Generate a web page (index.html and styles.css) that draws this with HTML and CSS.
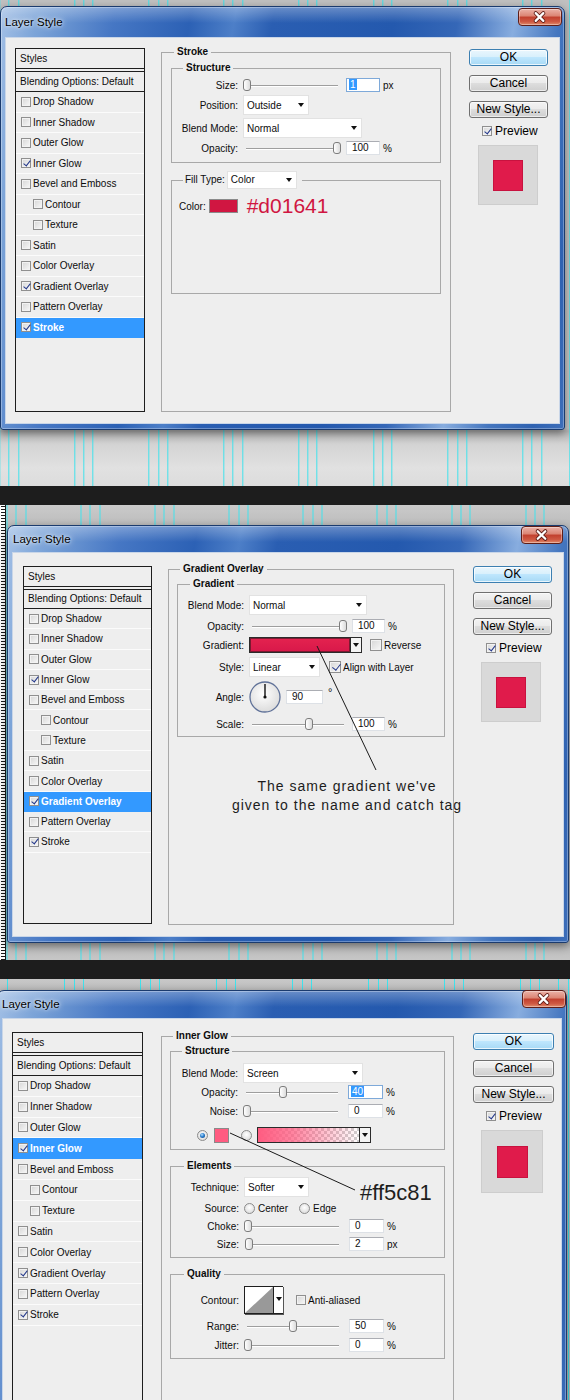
FILE: index.html
```html
<!DOCTYPE html>
<html lang="en">
<head>
<meta charset="utf-8">
<title>Layer Style</title>
<link rel="stylesheet" href="styles.css">
</head>
<body>
<main class="page">

<section class="band band1">
 <div class="dialog d1">
  <div class="titlebar"><span class="title">Layer Style</span><span class="close"><svg width="44" height="16" viewBox="0 0 44 16"><path d="M17.5 4l8 8M25.5 4l-8 8" stroke="#5a1a14" stroke-width="4.2" stroke-linecap="round"/><path d="M17.5 4l8 8M25.5 4l-8 8" stroke="#fff" stroke-width="2.4" stroke-linecap="round"/></svg></span></div>
  <div class="client">
   <div class="styles">
    <div class="hdr">Styles</div>
    <div class="blend">Blending Options: Default</div>
    <div class="it"><span class="cb"></span>Drop Shadow</div>
    <div class="it"><span class="cb"></span>Inner Shadow</div>
    <div class="it"><span class="cb"></span>Outer Glow</div>
    <div class="it"><span class="cb on"></span>Inner Glow</div>
    <div class="it"><span class="cb"></span>Bevel and Emboss</div>
    <div class="it sub"><span class="cb"></span>Contour</div>
    <div class="it sub"><span class="cb"></span>Texture</div>
    <div class="it"><span class="cb"></span>Satin</div>
    <div class="it"><span class="cb"></span>Color Overlay</div>
    <div class="it"><span class="cb on"></span>Gradient Overlay</div>
    <div class="it"><span class="cb"></span>Pattern Overlay</div>
    <div class="it sel"><span class="cb on"></span>Stroke</div>
   </div>
   <fieldset class="mid">
    <legend>Stroke</legend>
    <div class="gbody">
     <fieldset class="sub lw71">
      <legend>Structure</legend>
      <div class="rows s1">
       <div class="row"><span class="lbl">Size:</span><span class="sl" style="--v:0"><i></i></span><span class="num focus"><b>1</b></span><span class="unit">px</span></div>
       <div class="row h20"><span class="lbl">Position:</span><span class="drop w66">Outside</span></div>
       <div class="row h20"><span class="lbl">Blend Mode:</span><span class="drop w119">Normal</span></div>
       <div class="row"><span class="lbl">Opacity:</span><span class="sl" style="--v:1"><i></i></span><span class="num">100</span><span class="unit">%</span></div>
      </div>
     </fieldset>
     <fieldset class="sub fill">
      <legend class="fl"><span class="ft">Fill Type:</span><span class="drop w70 h18">Color</span></legend>
      <div class="colorrow"><span class="clabel">Color:</span><span class="sw red"></span><span class="hex">#d01641</span></div>
     </fieldset>
    </div>
   </fieldset>
   <div class="btns">
    <div class="btn ok">OK</div>
    <div class="btn">Cancel</div>
    <div class="btn">New Style...</div>
    <div class="pvrow"><span class="cb on"></span>Preview</div>
    <div class="pv"><i></i></div>
   </div>
  </div>
 </div>
</section>

<div class="black"></div>

<section class="band band2">
 <div class="dialog d2">
  <div class="titlebar"><span class="title">Layer Style</span><span class="close"><svg width="42" height="16" viewBox="0 0 42 16"><path d="M16.5 4l8 8M24.5 4l-8 8" stroke="#5a1a14" stroke-width="4.2" stroke-linecap="round"/><path d="M16.5 4l8 8M24.5 4l-8 8" stroke="#fff" stroke-width="2.4" stroke-linecap="round"/></svg></span></div>
  <div class="client">
   <div class="styles">
    <div class="hdr">Styles</div>
    <div class="blend">Blending Options: Default</div>
    <div class="it"><span class="cb"></span>Drop Shadow</div>
    <div class="it"><span class="cb"></span>Inner Shadow</div>
    <div class="it"><span class="cb"></span>Outer Glow</div>
    <div class="it"><span class="cb on"></span>Inner Glow</div>
    <div class="it"><span class="cb"></span>Bevel and Emboss</div>
    <div class="it sub"><span class="cb"></span>Contour</div>
    <div class="it sub"><span class="cb"></span>Texture</div>
    <div class="it"><span class="cb"></span>Satin</div>
    <div class="it"><span class="cb"></span>Color Overlay</div>
    <div class="it sel"><span class="cb on"></span>Gradient Overlay</div>
    <div class="it"><span class="cb"></span>Pattern Overlay</div>
    <div class="it"><span class="cb on"></span>Stroke</div>
   </div>
   <fieldset class="mid">
    <legend>Gradient Overlay</legend>
    <div class="gbody">
     <fieldset class="sub lw71 lg12">
      <legend>Gradient</legend>
      <div class="rows s2">
       <div class="row h20"><span class="lbl">Blend Mode:</span><span class="drop w118">Normal</span></div>
       <div class="row"><span class="lbl">Opacity:</span><span class="sl" style="--v:1"><i></i></span><span class="num w33">100</span><span class="unit">%</span></div>
       <div class="row h16"><span class="lbl">Gradient:</span><span class="gbar"><span class="gfill"></span><span class="garr"></span></span><span class="cb big m8"></span><span class="cbt">Reverse</span></div>
       <div class="row h20"><span class="lbl">Style:</span><span class="drop w71">Linear</span><span class="cb big on m9"></span><span class="cbt">Align with Layer</span></div>
       <div class="row h32"><span class="lbl">Angle:</span><svg class="dial" width="32" height="32" viewBox="0 0 32 32"><defs><radialGradient id="dg" cx="45%" cy="40%" r="65%"><stop offset="0" stop-color="#ffffff"/><stop offset="1" stop-color="#d9d9d9"/></radialGradient></defs><circle cx="16" cy="16" r="15" fill="url(#dg)" stroke="#5f7198" stroke-width="1.3"/><path d="M16 16V3" stroke="#111" stroke-width="1.4"/><circle cx="16" cy="16" r="1.6" fill="#111"/></svg><span class="num w37">90</span><span class="deg">°</span></div>
       <div class="row"><span class="lbl">Scale:</span><span class="sl" style="--v:.62"><i></i></span><span class="num w33">100</span><span class="unit">%</span></div>
      </div>
     </fieldset>
    </div>
   </fieldset>
   <div class="btns">
    <div class="btn ok">OK</div>
    <div class="btn">Cancel</div>
    <div class="btn">New Style...</div>
    <div class="pvrow"><span class="cb on"></span>Preview</div>
    <div class="pv"><i></i></div>
   </div>
  </div>
  <svg class="anno" width="560" height="416" viewBox="0 0 560 416"><line x1="309" y1="120" x2="368" y2="244" stroke="#1a1a1a" stroke-width="1"/></svg>
  <div class="note">The same gradient we've<br>given to the name and catch tag</div>
 </div>
</section>

<div class="black"></div>

<section class="band band3">
 <div class="dialog d3">
  <div class="titlebar"><span class="title">Layer Style</span><span class="close"><svg width="44" height="16" viewBox="0 0 44 16"><path d="M17.5 4l8 8M25.5 4l-8 8" stroke="#5a1a14" stroke-width="4.2" stroke-linecap="round"/><path d="M17.5 4l8 8M25.5 4l-8 8" stroke="#fff" stroke-width="2.4" stroke-linecap="round"/></svg></span></div>
  <div class="client">
   <div class="styles">
    <div class="hdr">Styles</div>
    <div class="blend">Blending Options: Default</div>
    <div class="it"><span class="cb"></span>Drop Shadow</div>
    <div class="it"><span class="cb"></span>Inner Shadow</div>
    <div class="it"><span class="cb"></span>Outer Glow</div>
    <div class="it sel"><span class="cb on"></span>Inner Glow</div>
    <div class="it"><span class="cb"></span>Bevel and Emboss</div>
    <div class="it sub"><span class="cb"></span>Contour</div>
    <div class="it sub"><span class="cb"></span>Texture</div>
    <div class="it"><span class="cb"></span>Satin</div>
    <div class="it"><span class="cb"></span>Color Overlay</div>
    <div class="it"><span class="cb on"></span>Gradient Overlay</div>
    <div class="it"><span class="cb"></span>Pattern Overlay</div>
    <div class="it"><span class="cb on"></span>Stroke</div>
   </div>
   <fieldset class="mid">
    <legend>Inner Glow</legend>
    <div class="gbody">
     <fieldset class="sub lw72">
      <legend>Structure</legend>
      <div class="rows s3a">
       <div class="row h20"><span class="lbl">Blend Mode:</span><span class="drop w120">Screen</span></div>
       <div class="row mt2"><span class="lbl">Opacity:</span><span class="sl" style="--v:.4"><i></i></span><span class="num w35 focus"><b>40</b></span><span class="unit">%</span></div>
       <div class="row mt5"><span class="lbl">Noise:</span><span class="sl" style="--v:0"><i></i></span><span class="num w35">0</span><span class="unit">%</span></div>
       <div class="row h16 mt9 crow"><span class="rd on"></span><span class="sw pink"></span><span class="rd m12"></span><span class="gbar g2"><span class="gfill pinkgrad"></span><span class="garr"></span></span></div>
      </div>
     </fieldset>
     <fieldset class="sub lw73 lg13 gapt">
      <legend>Elements</legend>
      <div class="rows s3b">
       <div class="row h20"><span class="lbl">Technique:</span><span class="drop w65">Softer</span></div>
       <div class="row"><span class="lbl">Source:</span><span class="rd"></span><span class="rt">Center</span><span class="rd m11"></span><span class="rt">Edge</span></div>
       <div class="row"><span class="lbl">Choke:</span><span class="sl" style="--v:0"><i></i></span><span class="num w35">0</span><span class="unit">%</span></div>
       <div class="row"><span class="lbl">Size:</span><span class="sl" style="--v:.01"><i></i></span><span class="num w35">2</span><span class="unit">px</span></div>
      </div>
     </fieldset>
     <fieldset class="sub lw73 lg13 gapt">
      <legend>Quality</legend>
      <div class="rows s3c">
       <div class="row h28"><span class="lbl">Contour:</span><span class="contour"><svg width="28" height="26" viewBox="0 0 28 26"><polygon points="0,26 28,0 28,26" fill="#999"/></svg><span class="garr"></span></span><span class="cb m13"></span><span class="cbt">Anti-aliased</span></div>
       <div class="row"><span class="lbl">Range:</span><span class="sl" style="--v:.5"><i></i></span><span class="num w35">50</span><span class="unit">%</span></div>
       <div class="row"><span class="lbl">Jitter:</span><span class="sl" style="--v:0"><i></i></span><span class="num w35">0</span><span class="unit">%</span></div>
      </div>
     </fieldset>
    </div>
   </fieldset>
   <div class="btns">
    <div class="btn ok">OK</div>
    <div class="btn">Cancel</div>
    <div class="btn">New Style...</div>
    <div class="pvrow"><span class="cb on"></span>Preview</div>
    <div class="pv"><i></i></div>
   </div>
  </div>
  <svg class="anno" width="568" height="452" viewBox="0 0 568 452"><line x1="232" y1="142" x2="357" y2="199" stroke="#1a1a1a" stroke-width="1"/></svg>
  <div class="hexnote">#ff5c81</div>
 </div>
</section>

</main>
</body>
</html>
```

FILE: styles.css
```css
* { box-sizing: border-box; }
html, body { margin: 0; padding: 0; }
body {
  width: 570px;
  height: 1400px;
  overflow: hidden;
  background: #c6c6c6;
  font-family: "Liberation Sans", Arial, sans-serif;
  font-size: 10px;
  color: #0c0c0c;
}
.page { display: block; }

/* ---------- backgrounds between the shots ---------- */
.band { overflow: hidden; }
.band1 {
  height: 486px;
  padding-top: 6px;
  background:
    repeating-linear-gradient(90deg, #3fe2ec 0 1px, transparent 1px 9.3px, #3fe2ec 9.3px 10.3px, transparent 10.3px 18.6px, #3fe2ec 18.6px 19.6px, transparent 19.6px 74.7px) -0.7px 0,
    linear-gradient(#c0c0c0 0, #c6c6c6 428px, #b4b4b4 431px, #d4d4d4 445px, #e1e1e1 468px, #dcdcdc 486px);
}
.black { height: 19px; background: #1d1d1d; }
.band2 {
  height: 455px;
  padding: 20px 0 0 7px;
  background:
    linear-gradient(#1a1a1a 1px, transparent 1px) 1px 1px / 4px 3px repeat-y,
    linear-gradient(#1a1a1a, #1a1a1a) 5px 0 / 1px 100% no-repeat,
    linear-gradient(#fff, #fff) 0 0 / 6px 100% no-repeat,
    repeating-linear-gradient(90deg, #3fe2ec 0 1px, transparent 1px 9.3px, #3fe2ec 9.3px 10.3px, transparent 10.3px 18.6px, #3fe2ec 18.6px 19.6px, transparent 19.6px 74.1px) 6.5px 0,
    linear-gradient(#cacaca 0, #bdbdbd 20px, #bcbcbc 440px, #c6c6c6 455px);
}
.band3 {
  height: 421px;
  padding-top: 11px;
  background:
    repeating-linear-gradient(90deg, #3fe2ec 0 1px, transparent 1px 9.5px, #3fe2ec 9.5px 10.5px, transparent 10.5px 19px, #3fe2ec 19px 20px, transparent 20px 76px) -12px 0,
    linear-gradient(#c8c8c8, #bdbdbd 11px);
}

/* ---------- window frame ---------- */
.dialog {
  position: relative;
  border: 1px solid #1b3b6e;
  border-radius: 7px 7px 3px 3px;
  padding: 0 4px 5px;
  background:
    linear-gradient(rgba(255,255,255,.3), rgba(255,255,255,0) 16px),
    linear-gradient(100deg, #a3c0e6 0%, #7ca4d8 6%, #4677c4 18%, #2c61b5 30%, #4d7fc8 37%, #2a5eb2 43%, #2459ae 62%, #3567b7 72%, #88addf 81%, #4476bf 88%, #2f62b1 95%, #3d6eb9 100%);
  box-shadow: 0 3px 9px rgba(0,0,0,.45), inset 0 0 0 1px rgba(255,255,255,.3);
}
.d1 { width: 565px; }
.d2 { width: 562px; }
.d3 { width: 570px; margin-left: -3px; }

.titlebar { display: flex; align-items: flex-start; margin: 0 -4px; }
.d1 .titlebar { height: 30px; padding-left: 4px; }
.d2 .titlebar { height: 26px; padding-left: 5px; }
.d3 .titlebar { height: 27px; padding-left: 4px; }
.title {
  font-size: 11.5px;
  line-height: 14px;
  color: #000;
  text-shadow: 0 0 6px rgba(255,255,255,.9), 0 0 3px rgba(255,255,255,.8);
}
.d1 .title { padding-top: 8px; }
.d2 .title, .d3 .title { padding-top: 6px; }
.close {
  margin-left: auto;
  width: 44px;
  height: 18px;
  border: 1px solid #5e1e18;
  border-radius: 4px;
  background: linear-gradient(#ebb2a8, #dc8675 42%, #c2412f 52%, #cf5a43 80%, #e08d6d);
  box-shadow: inset 0 0 0 1px rgba(255,255,255,.35);
  display: flex;
  align-items: center;
  justify-content: center;
}
.d1 .close { margin-top: 1px; margin-right: 2px; }
.d2 .close { margin-top: 0; margin-right: 5px; width: 42px; }
.d3 .close { margin-top: -1px; margin-right: 0; }

.client {
  display: flex;
  align-items: flex-start;
  background: #eeeeee;
  box-shadow: inset 0 0 0 1px #c9d6e8;
  overflow: hidden;
}
.d1 .client { height: 387px; }
.d2 .client { height: 385px; }
.d3 .client { height: 420px; }

/* ---------- styles list ---------- */
.styles { flex: none; border: 1px solid #1e1e1e; background: #eeeeee; overflow: hidden; }
.d1 .styles { width: 130px; height: 364px; margin: 11px 0 0 10px; --rh: 20.5px; --bh: 20px; }
.d2 .styles { width: 129px; height: 358px; margin: 14px 0 0 11px; --rh: 20.3px; --bh: 19px; }
.d3 .styles { width: 131px; height: 420px; margin: 14px 0 0 10px; --rh: 20.8px; --bh: 20px; }
.hdr { height: 23px; line-height: 19px; padding-left: 4px; border-bottom: 4px double #1e1e1e; }
.blend { height: var(--bh); line-height: calc(var(--bh) - 1px); padding-left: 4px; border-bottom: 1px solid #1e1e1e; white-space: nowrap; }
.it {
  height: var(--rh);
  display: flex;
  align-items: center;
  gap: 2px;
  padding-left: 5px;
  border-bottom: 1px solid #fbfbfb;
  white-space: nowrap;
}
.it.sub { padding-left: 17px; }
.it.sel { background: #3399ff; color: #fff; font-weight: bold; border-bottom-color: #3399ff; }

/* ---------- checkboxes & radios ---------- */
.cb {
  position: relative;
  flex: none;
  width: 10px;
  height: 10px;
  border: 1px solid #8f8f8f;
  background: linear-gradient(135deg, #d6d6d6, #f8f8f8);
  box-shadow: inset 0 0 0 1px #f2f2f2;
}
.cb.big { width: 12px; height: 12px; }
.cb.on::after {
  content: "";
  position: absolute;
  left: 2.5px;
  top: -0.5px;
  width: 3px;
  height: 6px;
  border: solid #22378a;
  border-width: 0 1.7px 1.7px 0;
  transform: rotate(38deg);
}
.cb.big.on::after { left: 3.5px; top: 0; width: 3.5px; height: 7px; }
.m8 { margin-left: 8px; }
.m9 { margin-left: 9px; }
.m11 { margin-left: 11px; }
.m12 { margin-left: 12px; }
.m13 { margin-left: 13px; }
.cbt { margin-left: 2px; white-space: nowrap; }
.rd {
  position: relative;
  flex: none;
  width: 11px;
  height: 11px;
  border-radius: 50%;
  border: 1px solid #8b8b8b;
  background: radial-gradient(circle at 50% 40%, #fff, #d4d4d4);
}
.rd.on::after {
  content: "";
  position: absolute;
  inset: 2px;
  border-radius: 50%;
  background: radial-gradient(circle at 40% 35%, #b8e2ff, #2a7fd0 45%, #0b3c78);
}
.rt { margin-left: 3px; }

/* ---------- group boxes ---------- */
fieldset { margin: 0; padding: 0; border: 1px solid #a8a8a8; min-width: 0; }
legend { padding: 0 3px; font-weight: bold; line-height: 12px; }
.mid { flex: none; }
.d1 .mid { width: 290px; height: 366px; margin: 9px 0 0 16px; }
.d2 .mid { width: 286px; height: 362px; margin: 11px 0 0 16px; }
.d3 .mid { width: 293px; height: 420px; margin: 12px 0 0 18px; }
.d1 .mid > legend { margin-left: 12px; }
.d2 .mid > legend, .d3 .mid > legend { margin-left: 11px; }
.gbody { padding: 3px 8px 0; }
.d1 .gbody { padding: 4px 9px 0; }
.sub > legend { margin-left: 11px; }
.sub.lg12 > legend { margin-left: 12px; }
.sub.lg13 > legend { margin-left: 13px; }
.gapt { margin-top: 10px; }
.lw71 { --lw: 71px; }
.lw72 { --lw: 72px; }
.lw73 { --lw: 73px; }

.rows { display: flex; flex-direction: column; gap: 4px; }
.rows.s1 { gap: 3px; padding: 4px 0 7px; }
.rows.s2 { padding: 5px 0 5px; }
.rows.s3a { gap: 0; padding: 6px 0 6px; }
.rows.s3b { padding: 5px 0 6px; }
.rows.s3c { gap: 5px; padding: 6px 0 6px; }
.mt2 { margin-top: 2px; }
.mt5 { margin-top: 5px; }
.mt9 { margin-top: 9px; }

.row { display: flex; align-items: center; height: 14px; white-space: nowrap; }
.row.h16 { height: 16px; }
.row.h20 { height: 20px; }
.row.h28 { height: 28px; }
.row.h32 { height: 32px; }
.lbl { flex: none; width: var(--lw, 71px); padding-right: 5px; text-align: right; }

/* ---------- controls ---------- */
.drop {
  display: flex;
  align-items: center;
  flex: none;
  height: 20px;
  padding-left: 3px;
  background: #fff;
  border: 1px solid #e2e2e2;
  font-weight: normal;
}
.drop::after {
  content: "";
  margin-left: auto;
  margin-right: 4px;
  border-left: 3.5px solid transparent;
  border-right: 3.5px solid transparent;
  border-top: 4px solid #111;
}
.drop.h18 { height: 18px; }
.w65 { width: 65px; }
.w66 { width: 66px; }
.w70 { width: 70px; }
.w71 { width: 71px; }
.w118 { width: 118px; }
.w119 { width: 119px; }
.w120 { width: 120px; }

.sl { position: relative; flex: none; width: 98px; height: 12px; }
.sl::before {
  content: "";
  position: absolute;
  left: 3px;
  right: 3px;
  top: 6px;
  height: 1px;
  background: #9e9e9e;
  box-shadow: 0 1px 0 #fff;
}
.sl i {
  position: absolute;
  top: 0;
  left: calc((100% - 8px) * var(--v));
  width: 8px;
  height: 12px;
  border: 1px solid #7d7d7d;
  border-radius: 3px 3px 3px 3px;
  background: linear-gradient(90deg, #ffffff, #dcdcdc);
}
.num {
  flex: none;
  width: 34px;
  height: 14px;
  margin-left: 5px;
  padding-left: 5px;
  line-height: 12px;
  background: #fff;
  border: 1px solid #dde1e6;
  border-top-color: #abadb3;
}
.num.w33 { width: 33px; }
.num.w35 { width: 35px; margin-left: 7px; }
.num.w37 { width: 37px; margin-left: 5px; }
.num.focus { border-color: #7ea9d9; }
.num.focus b { font-weight: normal; background: #3399ff; color: #fff; margin-left: -3px; padding: 0 1px; }
.unit { margin-left: 3px; }
.deg { align-self: flex-start; margin: 5px 0 0 5px; font-size: 11px; }
.dial { flex: none; }

.gbar { display: flex; flex: none; width: 113px; height: 16px; border: 1px solid #2b2b2b; background: #fff; }
.gfill { flex: 1; background: linear-gradient(#e4234f, #d8184a); border-right: 1px solid #2b2b2b; box-shadow: inset 0 0 0 1px #7a1a30; }
.garr { flex: none; width: 10px; display: flex; align-items: center; justify-content: center; background: #f4f4f4; }
.garr::after { content: ""; border-left: 3px solid transparent; border-right: 3px solid transparent; border-top: 4px solid #111; }
.gbar.g2 { width: 114px; margin-left: 5px; }
.pinkgrad {
  box-shadow: none;
  background:
    linear-gradient(90deg, #ff5c81 0%, rgba(255,92,129,.75) 35%, rgba(255,92,129,0) 100%),
    repeating-conic-gradient(#cfcfcf 0 25%, #ffffff 0 50%) 0 0 / 6px 6px;
}
.crow { padding-left: 26px; }
.sw { flex: none; border: 1px solid #8a8a8a; }
.sw.red { width: 29px; height: 14px; background: #d01641; margin-left: 3px; }
.sw.pink { width: 15px; height: 15px; background: #ff5c81; margin-left: 6px; }

.fill { height: 123px; margin-top: 8px; }
.fill > legend.fl {
  display: flex;
  align-items: center;
  font-weight: normal;
  line-height: 18px;
  margin-left: 11px;
  padding: 0 5px 0 2px;
}
.ft { margin-right: 2px; }
.colorrow { display: flex; align-items: center; height: 14px; margin-top: 10px; padding-left: 7px; }
.hex { margin-left: 9px; font-size: 21px; color: #d01641; line-height: 14px; }

.contour {
  display: flex;
  flex: none;
  width: 39px;
  height: 28px;
  border: 1px solid #1e1e1e;
  background: #fff;
  box-shadow: 1px 1px 0 #555;
}
.contour svg { flex: none; }
.contour .garr { width: 10px; align-items: flex-start; padding-top: 10px; border-left: 1px solid #1e1e1e; background: #fff; }

/* ---------- buttons column ---------- */
.btns { flex: none; }
.d1 .btns { width: 79px; margin: 12px 0 0 18px; }
.d2 .btns { width: 79px; margin: 14px 0 0 19px; }
.d3 .btns { width: 81px; margin: 15px 0 0 19px; }
.btn {
  height: 17px;
  line-height: 15px;
  text-align: center;
  font-size: 12px;
  color: #000;
  border: 1px solid #707070;
  border-radius: 3px;
  background: linear-gradient(#f3f3f3, #ebebeb 45%, #dddddd 50%, #cfcfcf);
  box-shadow: inset 0 0 0 1px rgba(255,255,255,.6);
}
.btn.ok {
  border-color: #3c7fb1;
  background: linear-gradient(#eaf6fd, #d9f0fc 45%, #bee6fd 50%, #a7d9f5);
  box-shadow: inset 0 0 0 1px rgba(255,255,255,.75);
}
.btn + .btn { margin-top: 9px; }
.d3 .btn + .btn { margin-top: 9.5px; }
.pvrow { display: flex; align-items: center; gap: 3px; height: 16px; margin-top: 5px; padding-left: 13px; font-size: 12px; color: #000; }
.pv { width: 60px; height: 60px; margin: 6px 0 0 9px; padding: 14px 0 0 14px; background: #d9d9d9; border: 1px solid #cdcdcd; }
.d2 .pv { margin-left: 8px; }
.d3 .pv { width: 62px; height: 63px; margin-left: 8px; padding: 15px 0 0 15px; }
.pv i { display: block; width: 30px; height: 31px; background: #e01b4b; border: 1px solid #c8123f; }
.d3 .pv i { width: 31px; height: 32px; }

/* ---------- annotations laid over the screenshots ---------- */
.anno { position: absolute; left: 0; top: 0; pointer-events: none; }
.note {
  position: absolute;
  left: 214px;
  top: 251px;
  width: 250px;
  text-align: center;
  font-size: 14px;
  line-height: 19px;
  letter-spacing: 1px;
  color: #1c1c1c;
}
.hexnote { position: absolute; left: 362px; top: 189px; font-size: 22px; line-height: 26px; color: #1e1e1e; }
```
